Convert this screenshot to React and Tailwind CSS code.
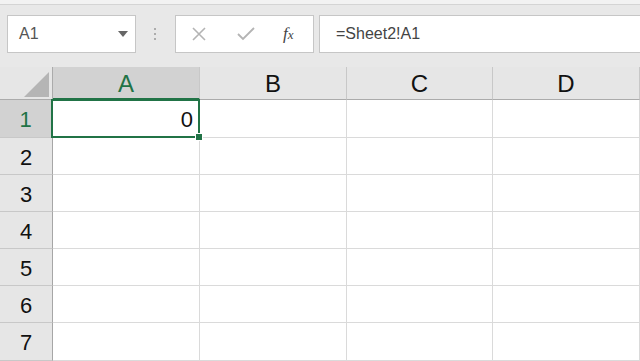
const font = { fontFamily: '"Liberation Sans", Arial, sans-serif' };

const cols = [
  { key: "A", w: "w-[147px]" },
  { key: "B", w: "w-[147px]" },
  { key: "C", w: "w-[146px]" },
  { key: "D", w: "w-[147px]" },
];
const rows = [1, 2, 3, 4, 5, 6, 7];

function NameBox() {
  return (
    <div className="flex h-[38px] w-[129px] items-center justify-between border border-[#c6c6c6] bg-white pl-[11px] pr-[7px]">
      <span className="text-[16px] text-[#555]">A1</span>
      <svg width="10" height="6" viewBox="0 0 10 6">
        <path d="M0 0h10L5 6z" fill="#666" />
      </svg>
    </div>
  );
}

function FxButtons() {
  return (
    <div className="flex h-[38px] w-[139px] items-center border border-[#c6c6c6] bg-white">
      <svg className="ml-[16px]" width="14" height="14" viewBox="0 0 14 14">
        <path d="M1 1l12 12M13 1L1 13" stroke="#b4b4b4" strokeWidth="1.6" />
      </svg>
      <svg className="ml-[31px]" width="18" height="14" viewBox="0 0 18 14">
        <path d="M1 7l5 5L17 1" stroke="#b4b4b4" strokeWidth="1.8" fill="none" />
      </svg>
      <span className="ml-[28px] font-['Liberation_Serif',serif] text-[17px] italic text-[#444]">
        f<span className="text-[13px]">x</span>
      </span>
    </div>
  );
}

function Toolbar() {
  return (
    <div className="flex h-[62px] items-start bg-[#e8e8e8] pl-[7px] pt-[10px]">
      <NameBox />
      <div className="ml-[18px] mr-[19px] flex h-[38px] flex-col items-center justify-center gap-[3px]">
        <span className="h-[2px] w-[2px] rounded-full bg-[#999]" />
        <span className="h-[2px] w-[2px] rounded-full bg-[#999]" />
        <span className="h-[2px] w-[2px] rounded-full bg-[#999]" />
      </div>
      <FxButtons />
      <div className="ml-[5px] flex h-[38px] flex-1 items-center border-y border-l border-[#c6c6c6] bg-white pl-[16px]">
        <span className="text-[16px] text-[#444]">=Sheet2!A1</span>
      </div>
    </div>
  );
}

function HeaderRow() {
  return (
    <div className="flex h-[33px] bg-[#e6e6e6]">
      <div className="relative w-[53px] border-r border-b border-[#ababab]">
        <svg className="absolute right-[3px] bottom-[2px]" width="25" height="25" viewBox="0 0 25 25">
          <path d="M25 0v25H0z" fill="#b5b5b5" />
        </svg>
      </div>
      {cols.map((c) => {
        const sel = c.key === "A";
        return (
          <div
            key={c.key}
            className={`${c.w} flex items-center justify-center border-r border-[#c8c8c8] text-[24px] ${
              sel ? "border-b-2 border-b-[#217346] bg-[#d2d2d2] pt-[3px] text-[#217346]" : "border-b border-b-[#ababab] pt-[2px] text-[#111]"
            }`}
          >
            {c.key}
          </div>
        );
      })}
    </div>
  );
}

function GridRow({ n }) {
  const sel = n === 1;
  return (
    <div className={`flex ${sel ? "h-[38px]" : "h-[37px]"} last:flex-1`}>
      <div
        className={`flex w-[53px] items-center justify-center border-b border-[#c8c8c8] pt-[2px] text-[22px] ${
          sel ? "border-r-2 border-r-[#217346] bg-[#d2d2d2] text-[#217346]" : "border-r border-r-[#a6a6a6] bg-[#e6e6e6] text-[#111]"
        }`}
      >
        {n}
      </div>
      {cols.map((c) => (
        <div key={c.key} className={`${c.w} relative border-r border-b border-[#dadada] bg-white`}>
          {sel && c.key === "A" && (
            <div className="absolute -top-px -left-[2px] -right-px -bottom-px z-10 flex items-center justify-end border-2 border-[#217346] pt-[2px] pr-[5px] text-[22px] text-[#111]">
              0
              <span className="absolute -right-[5px] -bottom-[5px] h-[8px] w-[8px] border border-white bg-[#217346]" />
            </div>
          )}
        </div>
      ))}
    </div>
  );
}

export default function App() {
  return (
    <div className="flex h-[361px] w-[640px] flex-col overflow-hidden bg-white" style={font}>
      <div className="h-[5px] border-b border-[#d4d4d4] bg-[#f2f2f2]" />
      <Toolbar />
      <HeaderRow />
      <div className="flex flex-1 flex-col">
        {rows.map((n) => (
          <GridRow key={n} n={n} />
        ))}
      </div>
    </div>
  );
}
